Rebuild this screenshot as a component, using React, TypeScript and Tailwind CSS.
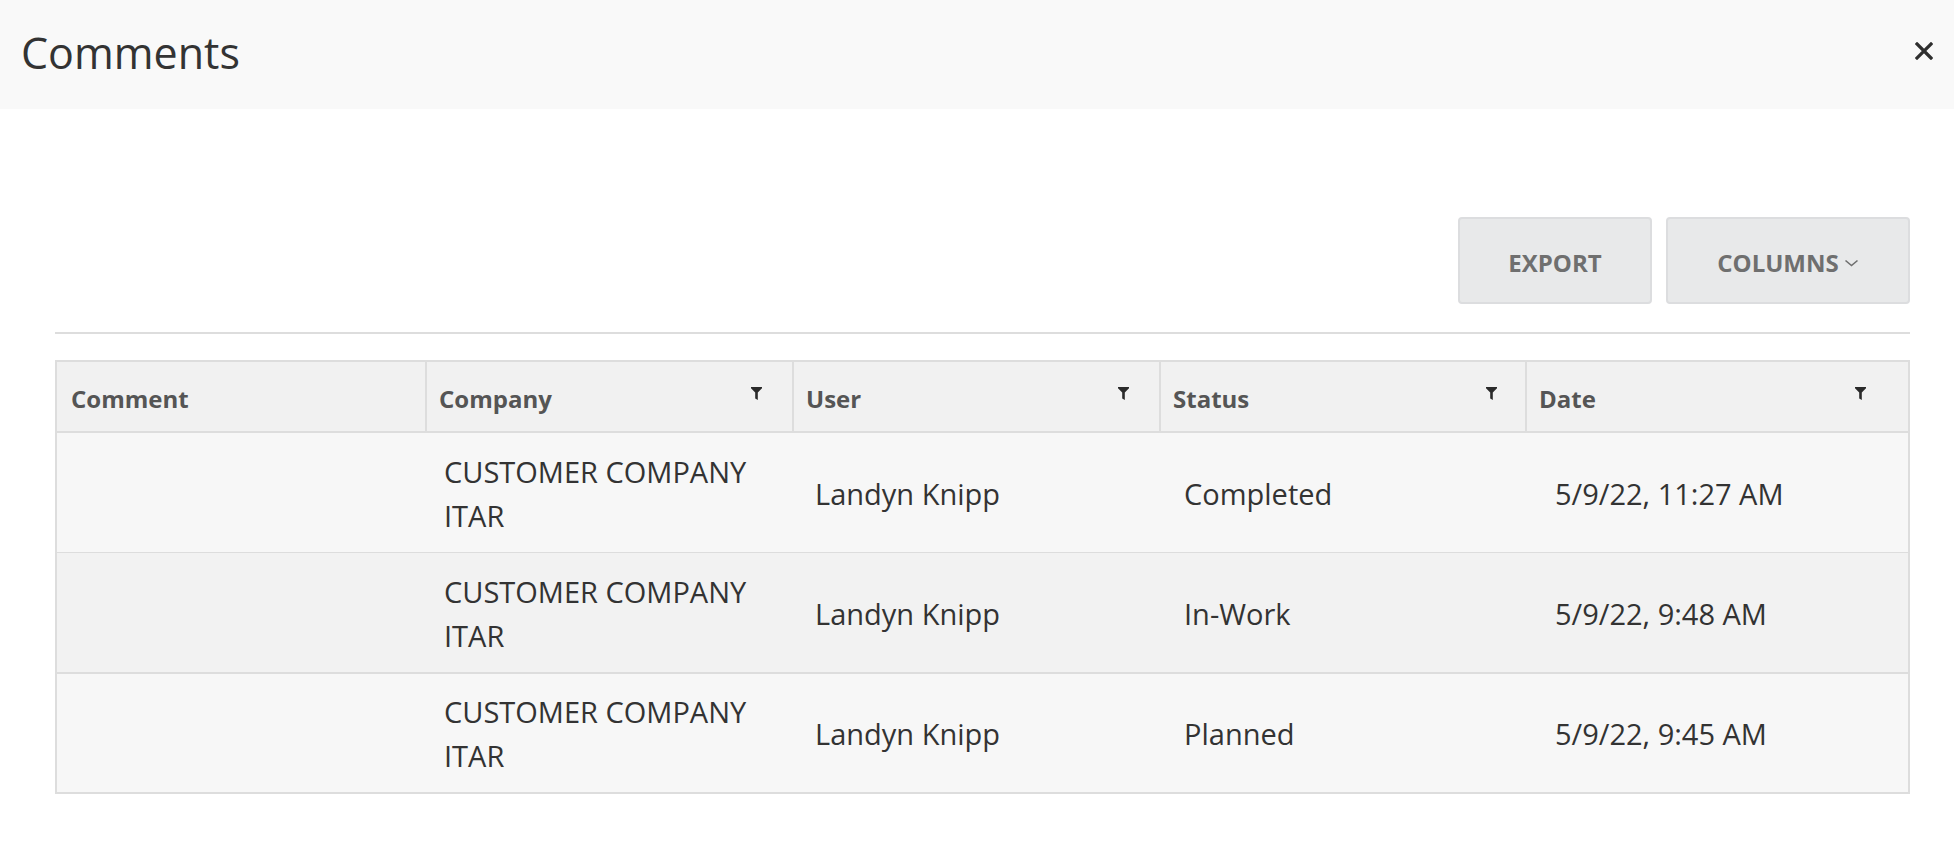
import React from "react";

const FilterIcon = () => (
  <svg width="11" height="13" viewBox="0 0 11 13" className="-translate-y-[3px] shrink-0">
    <path d="M0 0 H11 V1.2 L6.8 5.6 V13 L4.2 11.6 V5.6 L0 1.2 Z" fill="#2a2a2a" />
  </svg>
);

const rows = [
  { status: "Completed", date: "5/9/22, 11:27 AM", bg: "bg-[#f7f7f7]", border: "border-b border-[#dddddd]", h: "h-[120px]" },
  { status: "In-Work", date: "5/9/22, 9:48 AM", bg: "bg-[#f2f2f2]", border: "border-b-2 border-[#dddddd]", h: "h-[121px]" },
  { status: "Planned", date: "5/9/22, 9:45 AM", bg: "bg-[#f7f7f7]", border: "", h: "h-[118px]" },
];

export default function App() {
  return (
    <div className="w-full h-[841px] bg-white text-[#333333]" style={{ fontFamily: '"Open Sans", "Noto Sans", sans-serif' }}>
      <div className="h-[109px] bg-[#f9f9f9] flex items-center justify-between pl-[21px] pr-[21px]">
        <h1 className="text-[43px] font-normal leading-none text-[#333333] -translate-y-[2px]">Comments</h1>
        <svg width="18" height="18" viewBox="0 0 18 18" className="-translate-y-[4px]">
          <path d="M2 2 L16 16 M16 2 L2 16" stroke="#2f2f2f" strokeWidth="3.2" strokeLinecap="square" />
        </svg>
      </div>

      <div className="pl-[55px] pr-[44px]">
        <div className="flex justify-end gap-[14px] pt-[108px]">
          <button className="w-[194px] h-[87px] bg-[#e8e9ea] border-2 border-[#dcdddf] rounded-[4px] text-[24px] font-bold text-[#6f6f6f] flex items-center justify-center">
            <span className="translate-y-[2px]">EXPORT</span>
          </button>
          <button className="w-[244px] h-[87px] bg-[#e8e9ea] border-2 border-[#dcdddf] rounded-[4px] text-[24px] font-bold text-[#6f6f6f] flex items-center justify-center">
            <span className="translate-y-[2px]">COLUMNS</span>
            <svg width="15" height="8" viewBox="0 0 15 8" className="ml-[5px] translate-y-[2px]">
              <path d="M1.5 1.5 L7.5 6.5 L13.5 1.5" stroke="#6f6f6f" strokeWidth="1.6" fill="none" />
            </svg>
          </button>
        </div>

        <div className="mt-[28px] h-[2px] bg-[#dddddd]" />

        <div className="mt-[26px] border-2 border-[#dddddd]">
          <div className="grid grid-cols-[368px_367px_367px_366px_1fr] h-[71px] bg-[#f1f1f1] border-b-2 border-[#dddddd] text-[24px] font-bold text-[#555555]">
            <div className="flex items-center pl-[14px]">
              <span className="translate-y-[2px]">Comment</span>
            </div>
            <div className="flex items-center justify-between border-l-2 border-[#dddddd] pl-[12px] pr-[30px]">
              <span className="translate-y-[2px]">Company</span>
              <FilterIcon />
            </div>
            <div className="flex items-center justify-between border-l-2 border-[#dddddd] pl-[12px] pr-[30px]">
              <span className="translate-y-[2px]">User</span>
              <FilterIcon />
            </div>
            <div className="flex items-center justify-between border-l-2 border-[#dddddd] pl-[12px] pr-[28px]">
              <span className="translate-y-[2px]">Status</span>
              <FilterIcon />
            </div>
            <div className="flex items-center justify-between border-l-2 border-[#dddddd] pl-[12px] pr-[42px]">
              <span className="translate-y-[2px]">Date</span>
              <FilterIcon />
            </div>
          </div>

          {rows.map((r, i) => (
            <div
              key={i}
              className={`grid grid-cols-[368px_367px_367px_366px_1fr] ${r.h} ${r.bg} ${r.border} text-[29px] leading-[44px] text-[#333333]`}
            >
              <div />
              <div className="flex items-center pl-[19px]">
                <div className="translate-y-[1px]">
                  CUSTOMER COMPANY
                  <br />
                  ITAR
                </div>
              </div>
              <div className="flex items-center pl-[23px]">
                <span className="translate-y-[1px]">Landyn Knipp</span>
              </div>
              <div className="flex items-center pl-[25px]">
                <span className="translate-y-[1px]">{r.status}</span>
              </div>
              <div className="flex items-center pl-[30px]">
                <span className="translate-y-[1px]">{r.date}</span>
              </div>
            </div>
          ))}
        </div>
      </div>
    </div>
  );
}
